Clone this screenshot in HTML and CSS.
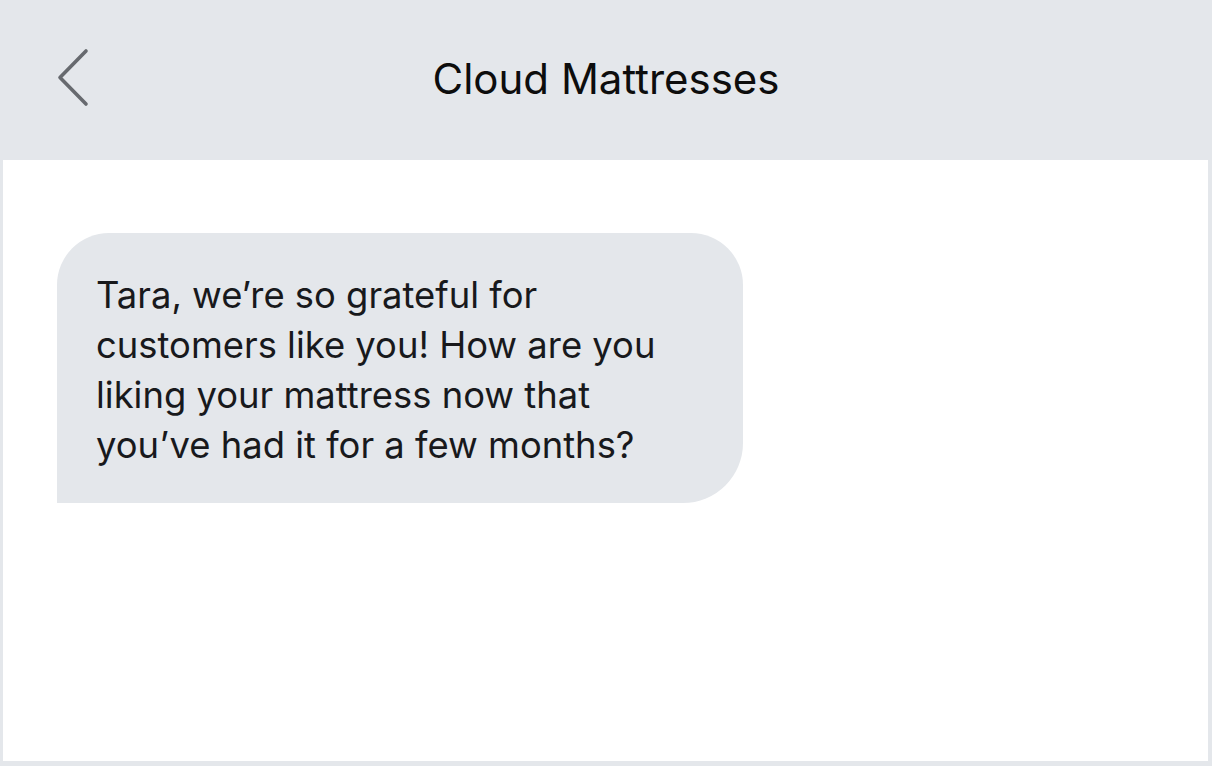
FILE: index.html
```html
<!DOCTYPE html>
<html lang="en">
<head>
<meta charset="utf-8">
<title>Cloud Mattresses</title>
<link rel="stylesheet" href="styles.css">
</head>
<body>
<div class="app">
  <header class="topbar">
    <button class="back" aria-label="Back">
      <svg width="40" height="64" viewBox="0 0 40 64" fill="none">
        <path d="M30 4 L4 30.5 L30 57" stroke="#676a6f" stroke-width="3.6" stroke-linecap="round" stroke-linejoin="round"/>
      </svg>
    </button>
    <h1 class="title">Cloud Mattresses</h1>
  </header>
  <main class="thread">
    <div class="bubble">
      <p class="msg">Tara, we’re so grateful for customers like you! How are you liking your mattress now that you’ve had it for a few months?</p>
    </div>
  </main>
</div>
</body>
</html>
```
FILE: styles.css
```css
html, body {
  margin: 0;
  padding: 0;
}
body {
  background: #e4e7eb;
  font-family: Inter, "Liberation Sans", Arial, sans-serif;
  width: 1212px;
  height: 766px;
  overflow: hidden;
}
.app {
  display: flex;
  flex-direction: column;
  height: 766px;
}
.topbar {
  height: 160px;
  display: flex;
  align-items: center;
  justify-content: center;
  position: relative;
  flex: none;
}
.back {
  position: absolute;
  left: 56px;
  top: 47px;
  background: none;
  border: 0;
  padding: 0;
  width: 40px;
  height: 64px;
  display: block;
}
.back svg { display: block; }
.title {
  margin: -2px 0 0 0;
  font-size: 42px;
  font-weight: 400;
  color: #0d0d0d;
  line-height: 1;
}
.thread {
  background: #fff;
  margin: 0 4px 5px 3px;
  flex: 1;
  padding: 73px 0 0 54px;
}
.bubble {
  width: 686px;
  height: 270px;
  box-sizing: border-box;
  background: #e4e7eb;
  border-radius: 52px 52px 60px 0;
  padding: 37px 60px 0 39px;
}
.msg {
  margin: 0;
  font-size: 36.4px;
  line-height: 50px;
  color: #18191c;
}
```
